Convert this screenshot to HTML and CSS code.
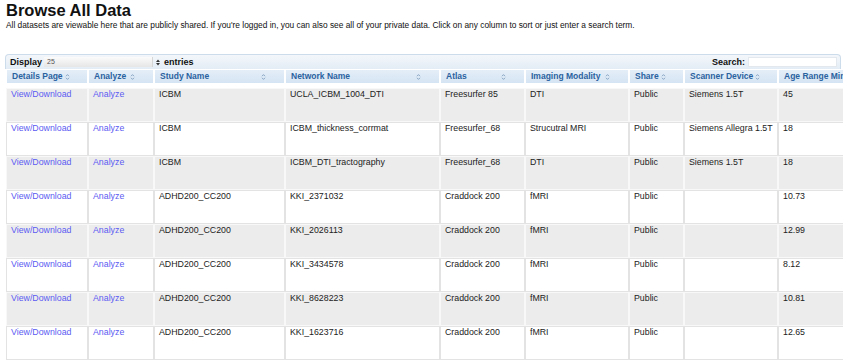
FILE: index.html
```html
<!DOCTYPE html>
<html lang="en">
<head>
  <meta charset="UTF-8">
  <meta name="viewport" content="width=device-width, initial-scale=1.0">
  <title>Browse All Data</title>
  <link rel="stylesheet" href="styles.css">
</head>
<body>
  <h1>Browse All Data</h1>
  <p class="intro">All datasets are viewable here that are publicly shared. If you're logged in, you can also see all of your private data. Click on any column to sort or just enter a search term.</p>

  <div class="data-wrap">
    <div class="toolbar">
      <div class="length">
        Display
        <span class="select"><span class="select-val">25</span><svg class="select-arrow" width="4" height="7" viewBox="0 0 4 7"><path d="M0 3 L2 0.5 L4 3 Z M0 4 L2 6.5 L4 4 Z" fill="#333"/></svg></span>
        entries
      </div>
      <div class="search">Search: <input type="text"></div>
    </div>

    <table class="datasets">
      <thead>
        <tr>
          <th class="c-details"><div class="th-in">Details Page <svg class="sort" width="5" height="8" viewBox="0 0 5 8"><path d="M1 3.2 L2.5 1.6 L4 3.2 M1 4.8 L2.5 6.4 L4 4.8" stroke="#8aa6c4" fill="none"/></svg></div></th>
          <th class="c-analyze"><div class="th-in">Analyze <svg class="sort" width="5" height="8" viewBox="0 0 5 8"><path d="M1 3.2 L2.5 1.6 L4 3.2 M1 4.8 L2.5 6.4 L4 4.8" stroke="#8aa6c4" fill="none"/></svg></div></th>
          <th class="c-study"><div class="th-in">Study Name <svg class="sort" width="5" height="8" viewBox="0 0 5 8"><path d="M1 3.2 L2.5 1.6 L4 3.2 M1 4.8 L2.5 6.4 L4 4.8" stroke="#8aa6c4" fill="none"/></svg></div></th>
          <th class="c-network"><div class="th-in">Network Name <svg class="sort" width="5" height="8" viewBox="0 0 5 8"><path d="M1 3.2 L2.5 1.6 L4 3.2 M1 4.8 L2.5 6.4 L4 4.8" stroke="#8aa6c4" fill="none"/></svg></div></th>
          <th class="c-atlas"><div class="th-in">Atlas <svg class="sort" width="5" height="8" viewBox="0 0 5 8"><path d="M1 3.2 L2.5 1.6 L4 3.2 M1 4.8 L2.5 6.4 L4 4.8" stroke="#8aa6c4" fill="none"/></svg></div></th>
          <th class="c-modality"><div class="th-in">Imaging Modality <svg class="sort" width="5" height="8" viewBox="0 0 5 8"><path d="M1 3.2 L2.5 1.6 L4 3.2 M1 4.8 L2.5 6.4 L4 4.8" stroke="#8aa6c4" fill="none"/></svg></div></th>
          <th class="c-share"><div class="th-in">Share <svg class="sort" width="5" height="8" viewBox="0 0 5 8"><path d="M1 3.2 L2.5 1.6 L4 3.2 M1 4.8 L2.5 6.4 L4 4.8" stroke="#8aa6c4" fill="none"/></svg></div></th>
          <th class="c-scanner"><div class="th-in">Scanner Device <svg class="sort" width="5" height="8" viewBox="0 0 5 8"><path d="M1 3.2 L2.5 1.6 L4 3.2 M1 4.8 L2.5 6.4 L4 4.8" stroke="#8aa6c4" fill="none"/></svg></div></th>
          <th class="c-age"><div class="th-in">Age Range Min <svg class="sort" width="5" height="8" viewBox="0 0 5 8"><path d="M1 3.2 L2.5 1.6 L4 3.2 M1 4.8 L2.5 6.4 L4 4.8" stroke="#8aa6c4" fill="none"/></svg></div></th>
        </tr>
      </thead>
      <tbody>
        <tr class="odd">
          <td><a href="#">View/Download</a></td><td><a href="#">Analyze</a></td>
          <td>ICBM</td><td>UCLA_ICBM_1004_DTI</td><td>Freesurfer 85</td><td>DTI</td><td>Public</td><td>Siemens 1.5T</td><td>45</td>
        </tr>
        <tr class="even">
          <td><a href="#">View/Download</a></td><td><a href="#">Analyze</a></td>
          <td>ICBM</td><td>ICBM_thickness_corrmat</td><td>Freesurfer_68</td><td>Strucutral MRI</td><td>Public</td><td>Siemens Allegra 1.5T</td><td>18</td>
        </tr>
        <tr class="odd">
          <td><a href="#">View/Download</a></td><td><a href="#">Analyze</a></td>
          <td>ICBM</td><td>ICBM_DTI_tractography</td><td>Freesurfer_68</td><td>DTI</td><td>Public</td><td>Siemens 1.5T</td><td>18</td>
        </tr>
        <tr class="even">
          <td><a href="#">View/Download</a></td><td><a href="#">Analyze</a></td>
          <td>ADHD200_CC200</td><td>KKI_2371032</td><td>Craddock 200</td><td>fMRI</td><td>Public</td><td></td><td>10.73</td>
        </tr>
        <tr class="odd">
          <td><a href="#">View/Download</a></td><td><a href="#">Analyze</a></td>
          <td>ADHD200_CC200</td><td>KKI_2026113</td><td>Craddock 200</td><td>fMRI</td><td>Public</td><td></td><td>12.99</td>
        </tr>
        <tr class="even">
          <td><a href="#">View/Download</a></td><td><a href="#">Analyze</a></td>
          <td>ADHD200_CC200</td><td>KKI_3434578</td><td>Craddock 200</td><td>fMRI</td><td>Public</td><td></td><td>8.12</td>
        </tr>
        <tr class="odd">
          <td><a href="#">View/Download</a></td><td><a href="#">Analyze</a></td>
          <td>ADHD200_CC200</td><td>KKI_8628223</td><td>Craddock 200</td><td>fMRI</td><td>Public</td><td></td><td>10.81</td>
        </tr>
        <tr class="even">
          <td><a href="#">View/Download</a></td><td><a href="#">Analyze</a></td>
          <td>ADHD200_CC200</td><td>KKI_1623716</td><td>Craddock 200</td><td>fMRI</td><td>Public</td><td></td><td>12.65</td>
        </tr>
      </tbody>
    </table>
  </div>
</body>
</html>
```

FILE: styles.css
```css
body {
  font-family: "Liberation Sans", Arial, sans-serif;
  background: #fff;
  color: #222;
  margin: 0;
  overflow: hidden;
}
h1 {
  margin: 0;
  padding-left: 6px;
  font-size: 16.5px;
  line-height: 20px;
  color: #111;
}
.intro {
  margin: 0;
  padding-left: 6px;
  font-size: 8.35px;
  line-height: 11px;
  color: #111;
}
.data-wrap {
  margin: 23px 0 0 5px;
}
.toolbar {
  width: 836px;
  height: 15px;
  box-sizing: border-box;
  display: flex;
  align-items: center;
  justify-content: space-between;
  padding: 0 3px 0 4px;
  border: 1px solid #cddcea;
  border-bottom: none;
  border-radius: 4px 4px 0 0;
  background: linear-gradient(to bottom, #f3f7fb, #e3ecf5);
  font-size: 9px;
  font-weight: bold;
  color: #111;
}
.length {
  display: flex;
  align-items: center;
}
.select {
  display: inline-flex;
  align-items: center;
  width: 116px;
  height: 10px;
  margin: 0 4px 0 2px;
  font-size: 7px;
  font-weight: normal;
  color: #555;
}
.select-val {
  flex: 1;
  height: 10px;
  line-height: 10px;
  padding-left: 3px;
  margin-right: 3px;
  background: linear-gradient(to bottom, #fbfbfb, #e6e6e6);
  border-right: 1px solid #d6d6d6;
}
.select-arrow {
  flex: none;
}
.search {
  display: flex;
  align-items: center;
}
.search input {
  width: 89px;
  height: 10px;
  box-sizing: border-box;
  margin: 0 0 0 3px;
  padding: 0;
  border: 1px solid #e2e8ee;
  background: #fff;
}
.datasets {
  margin-left: 1px;
  width: 892px;
  table-layout: fixed;
  border-collapse: separate;
  border-spacing: 0;
  font-size: 8.8px;
}
.datasets th,
.datasets td {
  box-sizing: border-box;
  text-align: left;
  vertical-align: top;
  white-space: nowrap;
  overflow: hidden;
}
.datasets th {
  height: 19px;
  padding: 0 18px 0 5px;
  line-height: 13px;
  border: 1px solid #fff;
  border-bottom-width: 5px;
  background: linear-gradient(to bottom, #e4eef8, #d5e4f3);
  color: #2a62a0;
  font-size: 8.5px;
  font-weight: bold;
}
.th-in {
  display: flex;
  align-items: center;
  justify-content: space-between;
  gap: 2px;
}
.sort {
  flex: none;
}
.datasets td {
  height: 34px;
  padding: 0 4px;
  line-height: 11px;
  border: 1px solid;
}
.odd td {
  background: #ececec;
  border-color: #f8f8f8;
}
.even td {
  background: #fff;
  border-color: #e3e3e3;
}
.datasets a {
  color: #5c5cf2;
  text-decoration: none;
}
.c-details { width: 82px; }
.c-analyze { width: 66px; }
.c-study { width: 131px; }
.c-network { width: 155px; }
.c-atlas { width: 85px; }
.c-modality { width: 104px; }
.c-share { width: 55px; }
.c-scanner { width: 94px; }
.c-age { width: 120px; }
```
